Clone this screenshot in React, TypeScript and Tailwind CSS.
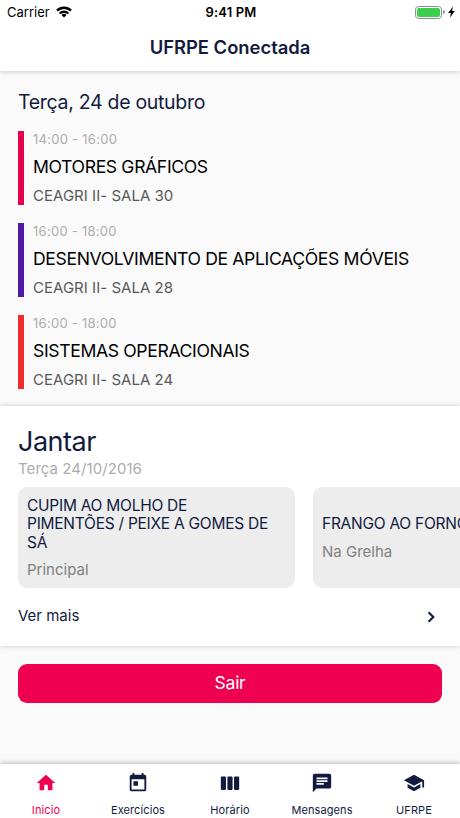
import type { ReactNode } from "react";
import { MdChat, MdHome, MdSchool, MdToday } from "react-icons/md";

const classes = [
  {
    time: "14:00 - 16:00",
    name: "MOTORES GRÁFICOS",
    room: "CEAGRI II- SALA 30",
    border: "border-[#e3004f]",
  },
  {
    time: "16:00 - 18:00",
    name: "DESENVOLVIMENTO DE APLICAÇÕES MÓVEIS",
    room: "CEAGRI II- SALA 28",
    border: "border-[#4f1ba5]",
  },
  {
    time: "16:00 - 18:00",
    name: "SISTEMAS OPERACIONAIS",
    room: "CEAGRI II- SALA 24",
    border: "border-[#ee2d2c]",
  },
];

const meals = [
  { dish: "CUPIM AO MOLHO DE PIMENTÕES / PEIXE A GOMES DE SÁ", kind: "Principal" },
  { dish: "FRANGO AO FORNO", kind: "Na Grelha" },
];

function WeekIcon() {
  return (
    <svg viewBox="0 0 24 24" fill="currentColor" className="size-[22px]">
      <rect x="2" y="5" width="5.6" height="14.5" rx="0.9" />
      <rect x="9.2" y="5" width="5.6" height="14.5" rx="0.9" />
      <rect x="16.4" y="5" width="5.6" height="14.5" rx="0.9" />
    </svg>
  );
}

const tabs: { label: string; icon: ReactNode; active?: boolean }[] = [
  { label: "Inicio", icon: <MdHome size={22} />, active: true },
  { label: "Exercícios", icon: <MdToday size={22} /> },
  { label: "Horário", icon: <WeekIcon /> },
  { label: "Mensagens", icon: <MdChat size={22} /> },
  { label: "UFRPE", icon: <MdSchool size={22} /> },
];

function StatusBar() {
  return (
    <div className="grid h-6 grid-cols-3 items-center pr-[5px] pl-[7px] text-[13px] leading-6 text-black">
      <div className="flex items-center gap-[6px]">
        <span>Carrier</span>
        <svg viewBox="0 0 16 12" className="h-[12px] w-[16px]">
          <g fill="none" stroke="currentColor" strokeWidth="2.3">
            <path d="M1 4.6a10 10 0 0 1 14 0" />
            <path d="M3.7 7.5a6.1 6.1 0 0 1 8.6 0" />
          </g>
          <path d="M8 11.6 5.5 9.1a3.5 3.5 0 0 1 5 0z" fill="currentColor" />
        </svg>
      </div>
      <span className="text-center font-semibold tracking-[0.15px]">9:41 PM</span>
      <div className="flex items-center justify-end">
        <div className="h-[13px] w-[27px] rounded-[3.5px] border border-[#8d8d8d] p-px">
          <div className="h-full rounded-[2px] bg-[#3ccf4e]" />
        </div>
        <div className="ml-px h-1 w-[1.5px] rounded-r-full bg-[#999999]" />
        <svg viewBox="0 0 7 12" className="ml-[3px] h-[12px] w-[7px]" fill="currentColor">
          <path d="M5 .4.2 7h2.7L1.9 11.8 6.8 5H4z" />
        </svg>
      </div>
    </div>
  );
}

export default function App() {
  return (
    <div className="flex h-[818px] w-[460px] flex-col overflow-hidden bg-[#fafafa] font-['Inter','Liberation_Sans',sans-serif] text-[#121a3e]">
      <header className="h-[71px] shrink-0 bg-white shadow-[0_1px_5px_rgba(0,0,0,0.18)]">
        <StatusBar />
        <h1 className="pt-[9px] text-center text-[18.4px] leading-7 font-semibold">UFRPE Conectada</h1>
      </header>

      {/* Today's classes */}
      <section className="h-[335px] shrink-0 px-[18px] pt-[17px]">
        <h2 className="text-[19.5px] leading-7 tracking-[-0.3px]">Terça, 24 de outubro</h2>
        <ul className="mt-[15px] space-y-[18px]">
          {classes.map((item) => (
            <li key={item.name} className={`h-[74px] border-l-[6px] pl-[9px] whitespace-nowrap ${item.border}`}>
              <p className="text-[13px] leading-[17px] tracking-[0.27px] text-[#adadad]">{item.time}</p>
              <p className="mt-[6px] text-[17.6px] leading-[26px] tracking-[-0.36px] text-black">{item.name}</p>
              <p className="mt-[5px] text-[15px] leading-[22px] tracking-[0.03px] text-[#595959]">{item.room}</p>
            </li>
          ))}
        </ul>
      </section>

      {/* Dinner menu */}
      <section className="h-[240px] shrink-0 bg-white pt-[18px] shadow-[0_0_5px_rgba(0,0,0,0.2)]">
        <div className="px-[18px]">
          <h2 className="text-[27px] leading-9 tracking-[-0.5px]">Jantar</h2>
          <p className="text-[15px] leading-[18px] tracking-[0.06px] text-[#adadad]">Terça 24/10/2016</p>
        </div>
        <div className="mt-[9px] flex gap-[18px] overflow-hidden pl-[18px]">
          {meals.map((meal) => (
            <div
              key={meal.dish}
              className="flex h-[101px] w-[277px] shrink-0 flex-col justify-center rounded-[9px] bg-[#ededed] pt-px pr-[23px] pl-[9px]"
            >
              <p className="text-[15.5px] leading-[18.5px] tracking-[-0.26px]">{meal.dish}</p>
              <p className="mt-[9px] text-[15px] leading-[18px] text-[#808080]">{meal.kind}</p>
            </div>
          ))}
        </div>
        <div className="flex items-center justify-between pt-4 pr-[25px] pl-[18px]">
          <span className="text-[15px] leading-6">Ver mais</span>
          <svg viewBox="0 0 8 12" className="mt-[2px] h-[12px] w-[8px]">
            <path d="m1.6 1.2 4.7 4.8-4.7 4.8" fill="none" stroke="currentColor" strokeWidth="2.1" />
          </svg>
        </div>
      </section>

      <div className="px-[18px] pt-[18px]">
        <button className="h-[39px] w-full rounded-[9px] bg-[#ef0050] text-[17.6px] tracking-[-0.3px] text-white">
          Sair
        </button>
      </div>

      <nav className="mt-auto grid h-[54px] shrink-0 grid-cols-5 bg-white shadow-[0_0_6px_rgba(0,0,0,0.35)]">
        {tabs.map((tab) => (
          <div
            key={tab.label}
            className={`flex flex-col items-center pt-[8px] ${tab.active ? "text-[#ef0050]" : ""}`}
          >
            {tab.icon}
            <span className="mt-[8px] text-[11px] leading-4 tracking-[0.1px]">{tab.label}</span>
          </div>
        ))}
      </nav>
    </div>
  );
}
